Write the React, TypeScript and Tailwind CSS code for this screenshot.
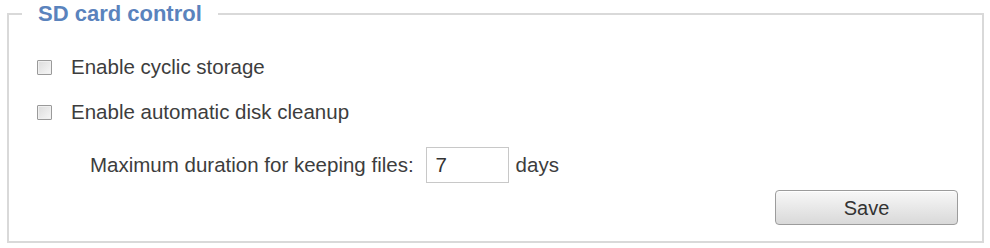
import type { ReactNode } from "react";

const FONT = "font-['Liberation_Sans',Arial,sans-serif]";

/** Old-school gray checkbox, unchecked. */
function Box() {
  return (
    <span className="inline-block size-[15px] shrink-0 rounded-[1px] border border-[#9a9a9a] bg-gradient-to-br from-[#dcdcdc] to-[#f7f7f7] shadow-[inset_0_0_0_1px_#f0f0f0]" />
  );
}

function CheckRow({ label }: { label: ReactNode }) {
  return (
    <label className="flex h-6 items-center gap-[19px]">
      <Box />
      <span className="text-[20.5px] leading-6 text-[#3d3d3d]">{label}</span>
    </label>
  );
}

export default function App() {
  return (
    <div className={`h-[248px] w-[990px] bg-white pt-0 pr-[6px] pl-[7px] ${FONT}`}>
      <fieldset className="m-0 border-2 border-[#d9d9d9] px-0 pt-[27px] pb-[16px]">
        <legend className="ml-[13px] px-4 text-[22px] leading-7 font-bold text-[#5a83bd]">
          SD card control
        </legend>

        <div className="flex flex-col pl-[28px]">
          <CheckRow label="Enable cyclic storage" />
          <div className="mt-[21px]">
            <CheckRow label="Enable automatic disk cleanup" />
          </div>

          <div className="mt-[23px] flex items-center pl-[53px] text-[20.5px] text-[#3d3d3d]">
            <span>Maximum duration for keeping files:</span>
            <input
              defaultValue="7"
              className="ml-[12px] h-[36px] w-[83px] border border-[#c8c8c8] bg-white pl-[9px] text-[20.5px] text-[#333] outline-none"
            />
            <span className="ml-[7px]">days</span>
          </div>

          <div className="mt-[7px] flex justify-end pr-[24px]">
            <button className="h-[35px] w-[183px] rounded-[4px] border border-[#9c9c9c] bg-gradient-to-b from-[#f8f8f8] to-[#d9d9d9] text-[20px] text-[#333] shadow-[inset_0_1px_0_#ffffff]">
              Save
            </button>
          </div>
        </div>
      </fieldset>
    </div>
  );
}
